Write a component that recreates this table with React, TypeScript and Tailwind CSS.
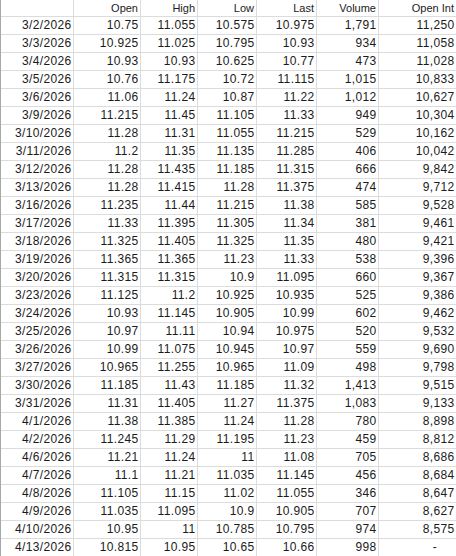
const headers = ["", "Open", "High", "Low", "Last", "Volume", "Open Int"];

const rows: string[][] = [
  ["3/2/2026", "10.75", "11.055", "10.575", "10.975", "1,791", "11,250"],
  ["3/3/2026", "10.925", "11.025", "10.795", "10.93", "934", "11,058"],
  ["3/4/2026", "10.93", "10.93", "10.625", "10.77", "473", "11,028"],
  ["3/5/2026", "10.76", "11.175", "10.72", "11.115", "1,015", "10,833"],
  ["3/6/2026", "11.06", "11.24", "10.87", "11.22", "1,012", "10,627"],
  ["3/9/2026", "11.215", "11.45", "11.105", "11.33", "949", "10,304"],
  ["3/10/2026", "11.28", "11.31", "11.055", "11.215", "529", "10,162"],
  ["3/11/2026", "11.2", "11.35", "11.135", "11.285", "406", "10,042"],
  ["3/12/2026", "11.28", "11.435", "11.185", "11.315", "666", "9,842"],
  ["3/13/2026", "11.28", "11.415", "11.28", "11.375", "474", "9,712"],
  ["3/16/2026", "11.235", "11.44", "11.215", "11.38", "585", "9,528"],
  ["3/17/2026", "11.33", "11.395", "11.305", "11.34", "381", "9,461"],
  ["3/18/2026", "11.325", "11.405", "11.325", "11.35", "480", "9,421"],
  ["3/19/2026", "11.365", "11.365", "11.23", "11.33", "538", "9,396"],
  ["3/20/2026", "11.315", "11.315", "10.9", "11.095", "660", "9,367"],
  ["3/23/2026", "11.125", "11.2", "10.925", "10.935", "525", "9,386"],
  ["3/24/2026", "10.93", "11.145", "10.905", "10.99", "602", "9,462"],
  ["3/25/2026", "10.97", "11.11", "10.94", "10.975", "520", "9,532"],
  ["3/26/2026", "10.99", "11.075", "10.945", "10.97", "559", "9,690"],
  ["3/27/2026", "10.965", "11.255", "10.965", "11.09", "498", "9,798"],
  ["3/30/2026", "11.185", "11.43", "11.185", "11.32", "1,413", "9,515"],
  ["3/31/2026", "11.31", "11.405", "11.27", "11.375", "1,083", "9,133"],
  ["4/1/2026", "11.38", "11.385", "11.24", "11.28", "780", "8,898"],
  ["4/2/2026", "11.245", "11.29", "11.195", "11.23", "459", "8,812"],
  ["4/6/2026", "11.21", "11.24", "11", "11.08", "705", "8,686"],
  ["4/7/2026", "11.1", "11.21", "11.035", "11.145", "456", "8,684"],
  ["4/8/2026", "11.105", "11.15", "11.02", "11.055", "346", "8,647"],
  ["4/9/2026", "11.035", "11.095", "10.9", "10.905", "707", "8,627"],
  ["4/10/2026", "10.95", "11", "10.785", "10.795", "974", "8,575"],
  ["4/13/2026", "10.815", "10.95", "10.65", "10.66", "998", "-"],
];

const App = () => {
  return (
    <div className="h-[556px] w-[456px] overflow-hidden bg-white text-[#1b1b1b] font-['Liberation_Sans',Arial,sans-serif]">
      <div className="grid grid-cols-[73px_67px_57px_59px_60px_62px_77px] border-l border-[#a8a8a8]">
        {/* Header */}
        {headers.map((h, i) => (
          <div
            key={"h" + i}
            className={
              "h-[17px] border-b border-[#dcdcdc] pr-[2px] text-right text-[11px] leading-[16px] whitespace-nowrap " +
              (i === 6 ? "" : "border-r")
            }
          >
            {h}
          </div>
        ))}

        {/* Rows */}
        {rows.map((row, r) =>
          row.map((cell, c) => (
            <div
              key={r + "-" + c}
              className={
                "h-[18px] border-b border-[#dcdcdc] text-right text-[12px] leading-[17px] tracking-[0.35px] " +
                (c === 6 ? "" : "border-r ") +
                (cell === "-" ? "pr-[19px]" : "pr-[1.5px]")
              }
            >
              {cell}
            </div>
          ))
        )}
      </div>
    </div>
  );
};

export default App;
